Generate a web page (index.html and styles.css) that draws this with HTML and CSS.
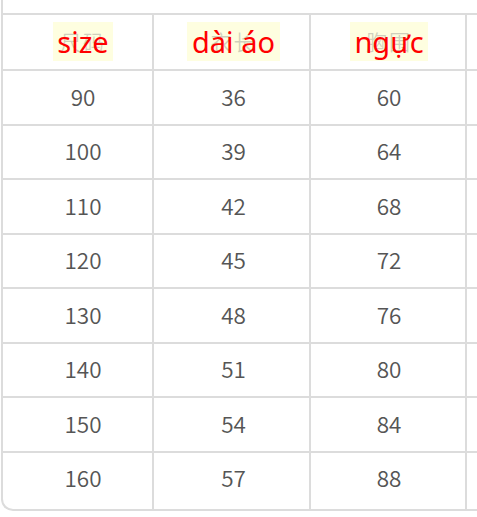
FILE: index.html
```html
<!DOCTYPE html>
<html>
<head>
<meta charset="utf-8">
<link rel="stylesheet" href="styles.css">
</head>
<body>
<div class="frame">
  <div class="grid">
    <div class="cell head c1"><span class="label"><span class="orig">尺码</span><span class="tr">size</span></span></div>
    <div class="cell head c2"><span class="label"><span class="orig">衣长</span><span class="tr">dài áo</span></span></div>
    <div class="cell head c3"><span class="label"><span class="orig">胸围</span><span class="tr">ngực</span></span></div>
    <div class="cell head c4"></div>

    <div class="cell c1">90</div><div class="cell c2">36</div><div class="cell c3">60</div><div class="cell c4"></div>
    <div class="cell c1">100</div><div class="cell c2">39</div><div class="cell c3">64</div><div class="cell c4"></div>
    <div class="cell c1">110</div><div class="cell c2">42</div><div class="cell c3">68</div><div class="cell c4"></div>
    <div class="cell c1">120</div><div class="cell c2">45</div><div class="cell c3">72</div><div class="cell c4"></div>
    <div class="cell c1">130</div><div class="cell c2">48</div><div class="cell c3">76</div><div class="cell c4"></div>
    <div class="cell c1">140</div><div class="cell c2">51</div><div class="cell c3">80</div><div class="cell c4"></div>
    <div class="cell c1">150</div><div class="cell c2">54</div><div class="cell c3">84</div><div class="cell c4"></div>
    <div class="cell last c1">160</div><div class="cell last c2">57</div><div class="cell last c3">88</div><div class="cell last c4"></div>
  </div>
</div>
</body>
</html>
```
FILE: styles.css
```css
html, body {
  margin: 0;
  padding: 0;
  background: #ffffff;
  overflow: hidden;
}
.frame {
  margin-left: 1px;
  width: 490px;
  padding-top: 13px;
  border-left: 2px solid #dcdcdc;
  border-bottom: 2px solid #dcdcdc;
  border-bottom-left-radius: 12px;
  overflow: hidden;
}
.grid {
  display: grid;
  grid-template-columns: 151px 157px 156px 1fr;
  grid-template-rows: 56px repeat(7, 54.5px) 58px;
}
.cell {
  box-sizing: border-box;
  border-top: 2px solid #dcdcdc;
  border-right: 2px solid #dcdcdc;
  display: flex;
  align-items: center;
  justify-content: center;
  padding-bottom: 3px;
  font-family: "Noto Sans CJK SC", "Noto Sans", sans-serif;
  font-weight: 350;
  font-size: 22.5px;
  color: #555555;
}
.head { padding-bottom: 1px; }
.last { padding-bottom: 8px; }
.c1 { padding-left: 11px; }
.c2 { padding-left: 4px; }
.c3 { padding-left: 2px; }
.c4 { border-right: none; }
.label {
  position: relative;
  display: inline-block;
  background: #fefee0;
  padding: 0 4px;
  height: 39px;
  line-height: 39px;
}
.c2 .label { padding: 0 5px; }
.orig {
  position: absolute;
  left: 0;
  right: 0;
  top: 0;
  text-align: center;
  font-family: "Noto Sans CJK SC", sans-serif;
  font-size: 21px;
  color: rgba(120, 120, 120, 0.35);
  letter-spacing: 2px;
}
.tr {
  position: relative;
  font-family: "Noto Sans", sans-serif;
  font-weight: 400;
  font-size: 29px;
  color: #ff0000;
}
```
